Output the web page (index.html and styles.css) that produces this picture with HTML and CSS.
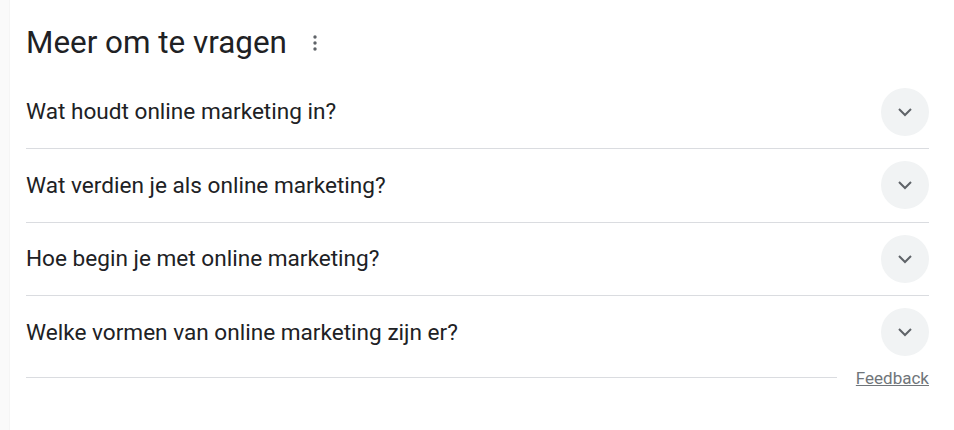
FILE: index.html
```html
<!DOCTYPE html>
<html>
<head>
    <title>Meer om te vragen</title>
    <link rel="stylesheet" href="styles.css">
</head>
<body>
    <div class="card">
        <div class="card-head">
            <h2>Meer om te vragen</h2>
            <button class="more" aria-label="Meer opties">
                <svg width="4" height="16" viewBox="0 0 4 16"><circle cx="2" cy="2" r="1.7"/><circle cx="2" cy="8" r="1.7"/><circle cx="2" cy="14" r="1.7"/></svg>
            </button>
        </div>
        <div class="questions">
            <div class="question">
                <span>Wat houdt online marketing in?</span>
                <span class="toggle"><svg width="16" height="10" viewBox="0 0 16 10"><path d="M2 2l6 6 6-6"/></svg></span>
            </div>
            <div class="question">
                <span>Wat verdien je als online marketing?</span>
                <span class="toggle"><svg width="16" height="10" viewBox="0 0 16 10"><path d="M2 2l6 6 6-6"/></svg></span>
            </div>
            <div class="question">
                <span>Hoe begin je met online marketing?</span>
                <span class="toggle"><svg width="16" height="10" viewBox="0 0 16 10"><path d="M2 2l6 6 6-6"/></svg></span>
            </div>
            <div class="question">
                <span>Welke vormen van online marketing zijn er?</span>
                <span class="toggle"><svg width="16" height="10" viewBox="0 0 16 10"><path d="M2 2l6 6 6-6"/></svg></span>
            </div>
        </div>
        <div class="feedback-row">
            <div class="rule"></div>
            <a href="#" class="feedback">Feedback</a>
        </div>
    </div>
</body>
</html>
```
FILE: styles.css
```css
body {
    margin: 0;
    padding: 0;
    background-color: #fafafa;
    font-family: Roboto, "Liberation Sans", Arial, sans-serif;
    color: #202124;
    overflow: hidden;
}
.card {
    background-color: #fff;
    margin: -10px -20px 0 10px;
    padding: 35px 45px 48px 16px;
    box-shadow: 0 0 1px rgba(0, 0, 0, 0.12);
}
.card-head {
    display: flex;
    align-items: center;
    height: 36px;
}
.card-head h2 {
    margin: 0;
    font-size: 31.4px;
    font-weight: 400;
    line-height: 36px;
}
.more {
    background: none;
    border: none;
    padding: 0;
    margin-left: 26px;
    display: flex;
    fill: #5f6368;
}
.questions {
    margin-top: 14.5px;
}
.question {
    display: flex;
    align-items: center;
    justify-content: space-between;
    height: 72.5px;
    border-bottom: 1px solid #dadce0;
    font-size: 22.6px;
}
.question:last-child {
    border-bottom: none;
}
.toggle {
    width: 48px;
    height: 48px;
    border-radius: 50%;
    background-color: #f1f3f4;
    display: flex;
    align-items: center;
    justify-content: center;
}
.toggle svg {
    fill: none;
    stroke: #5f6368;
    stroke-width: 2;
}
.feedback-row {
    display: flex;
    align-items: center;
    height: 18px;
}
.rule {
    flex: 1;
    border-top: 1px solid #dadce0;
    margin-right: 19px;
}
.feedback {
    font-size: 17px;
    color: #70757a;
    text-decoration: underline;
}
```
